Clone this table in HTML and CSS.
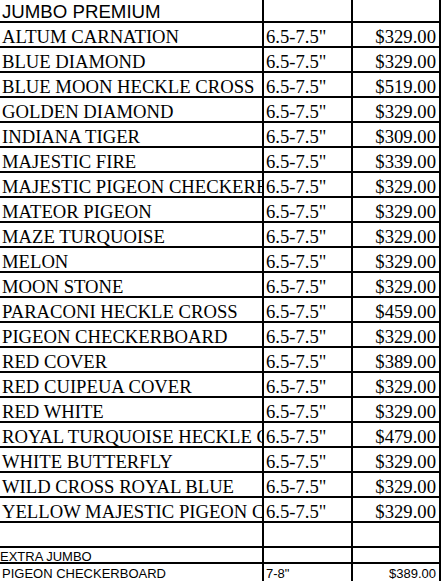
FILE: index.html
```html
<!DOCTYPE html>
<html>
<head>
<meta charset="utf-8">
<title>Jumbo Premium</title>
<link rel="stylesheet" href="styles.css">
</head>
<body>
<div class="sheet">
  <div class="cell head">JUMBO PREMIUM</div><div class="cell"></div><div class="cell"></div>

  <div class="cell name">ALTUM CARNATION</div><div class="cell size">6.5-7.5"</div><div class="cell price">$329.00</div>
  <div class="cell name">BLUE DIAMOND</div><div class="cell size">6.5-7.5"</div><div class="cell price">$329.00</div>
  <div class="cell name">BLUE MOON HECKLE CROSS</div><div class="cell size">6.5-7.5"</div><div class="cell price">$519.00</div>
  <div class="cell name">GOLDEN DIAMOND</div><div class="cell size">6.5-7.5"</div><div class="cell price">$329.00</div>
  <div class="cell name">INDIANA TIGER</div><div class="cell size">6.5-7.5"</div><div class="cell price">$309.00</div>
  <div class="cell name">MAJESTIC FIRE</div><div class="cell size">6.5-7.5"</div><div class="cell price">$339.00</div>
  <div class="cell name">MAJESTIC PIGEON CHECKERED</div><div class="cell size">6.5-7.5"</div><div class="cell price">$329.00</div>
  <div class="cell name">MATEOR PIGEON</div><div class="cell size">6.5-7.5"</div><div class="cell price">$329.00</div>
  <div class="cell name">MAZE TURQUOISE</div><div class="cell size">6.5-7.5"</div><div class="cell price">$329.00</div>
  <div class="cell name">MELON</div><div class="cell size">6.5-7.5"</div><div class="cell price">$329.00</div>
  <div class="cell name">MOON STONE</div><div class="cell size">6.5-7.5"</div><div class="cell price">$329.00</div>
  <div class="cell name">PARACONI HECKLE CROSS</div><div class="cell size">6.5-7.5"</div><div class="cell price">$459.00</div>
  <div class="cell name">PIGEON CHECKERBOARD</div><div class="cell size">6.5-7.5"</div><div class="cell price">$329.00</div>
  <div class="cell name">RED COVER</div><div class="cell size">6.5-7.5"</div><div class="cell price">$389.00</div>
  <div class="cell name">RED CUIPEUA COVER</div><div class="cell size">6.5-7.5"</div><div class="cell price">$329.00</div>
  <div class="cell name">RED WHITE</div><div class="cell size">6.5-7.5"</div><div class="cell price">$329.00</div>
  <div class="cell name">ROYAL TURQUOISE HECKLE CROSS</div><div class="cell size">6.5-7.5"</div><div class="cell price">$479.00</div>
  <div class="cell name">WHITE BUTTERFLY</div><div class="cell size">6.5-7.5"</div><div class="cell price">$329.00</div>
  <div class="cell name">WILD CROSS ROYAL BLUE</div><div class="cell size">6.5-7.5"</div><div class="cell price">$329.00</div>
  <div class="cell name">YELLOW MAJESTIC PIGEON CHECKERED</div><div class="cell size">6.5-7.5"</div><div class="cell price">$329.00</div>

  <div class="cell"></div><div class="cell"></div><div class="cell"></div>

  <div class="cell small sub">EXTRA JUMBO</div><div class="cell small"></div><div class="cell small"></div>
  <div class="cell last">PIGEON CHECKERBOARD</div><div class="cell last">7-8"</div><div class="cell last right">$389.00</div>
</div>
</body>
</html>
```

FILE: styles.css
```css
html, body {
  margin: 0;
  padding: 0;
  background: #fff;
}

body {
  width: 441px;
  height: 581px;
  overflow: hidden;
  color: #000;
  font-family: "Liberation Serif", "Times New Roman", serif;
  font-size: 18.67px;
  line-height: 19px;
}

.sheet {
  display: grid;
  grid-template-columns: 264px 89px 88px;
  grid-template-rows: 23px repeat(21, 25px) 16px 17px;
}

.cell {
  box-sizing: border-box;
  border-right: 2px solid #000;
  border-bottom: 2px solid #000;
  display: flex;
  align-items: flex-end;
  white-space: nowrap;
  overflow: hidden;
  padding-left: 2px;
}

.head {
  font-family: "Liberation Sans", Arial, sans-serif;
  line-height: 18px;
}

.price {
  justify-content: flex-end;
  padding-left: 0;
  padding-right: 3px;
}

.small {
  font-family: "Liberation Sans", Arial, sans-serif;
  font-size: 13px;
  line-height: 11px;
  padding-left: 0;
}

.last {
  font-family: "Liberation Sans", Arial, sans-serif;
  font-size: 13px;
  line-height: normal;
  border-bottom: none;
}

.last:first-child,
.sub {
  padding-left: 0;
}

.right {
  justify-content: flex-end;
  padding-left: 0;
  padding-right: 3px;
}
```
